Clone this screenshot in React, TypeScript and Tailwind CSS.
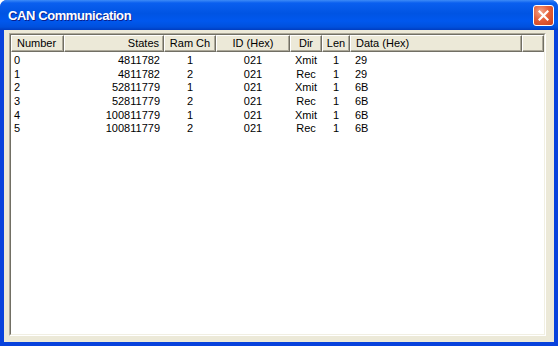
import React from 'react';

type Col = { label: string; w: string; head: string; cell: string };

const cols: Col[] = [
  { label: 'Number', w: 'w-[53px]', head: 'justify-start pl-[5px]', cell: 'text-left pl-[3px]' },
  { label: 'States', w: 'w-[100px]', head: 'justify-end pr-[4px]', cell: 'text-right pr-[4px]' },
  { label: 'Ram Ch', w: 'w-[52px]', head: 'justify-center', cell: 'text-center' },
  { label: 'ID (Hex)', w: 'w-[74px]', head: 'justify-center', cell: 'text-center' },
  { label: 'Dir', w: 'w-[32px]', head: 'justify-center', cell: 'text-center' },
  { label: 'Len', w: 'w-[28px]', head: 'justify-center', cell: 'text-center' },
  { label: 'Data (Hex)', w: 'w-[172px]', head: 'justify-start pl-[5px]', cell: 'text-left pl-[5px]' },
];

const rows = [
  ['0', '4811782', '1', '021', 'Xmit', '1', '29'],
  ['1', '4811782', '2', '021', 'Rec', '1', '29'],
  ['2', '52811779', '1', '021', 'Xmit', '1', '6B'],
  ['3', '52811779', '2', '021', 'Rec', '1', '6B'],
  ['4', '100811779', '1', '021', 'Xmit', '1', '6B'],
  ['5', '100811779', '2', '021', 'Rec', '1', '6B'],
];

// classic 3D header button
const headCell = 'h-[17px] flex items-center bg-[#ECE9D8] border-t border-l border-t-white border-l-white border-b border-r border-b-[#716F64] border-r-[#716F64] shadow-[inset_-1px_-1px_0_#ACA899]';

const App: React.FC = () => {
  return (
    <div className="w-[558px] h-[346px] flex flex-col bg-[#0842DC] rounded-t-[7px] overflow-hidden font-['Liberation_Sans',Arial,sans-serif]">
      {/* Title bar */}
      <div className="h-[30px] shrink-0 flex items-center justify-between pl-[8px] pr-[5px] bg-[linear-gradient(to_bottom,#3D8BF7_0%,#0A5FEF_10%,#0054E3_45%,#0058EE_70%,#0050DD_90%,#003DC0_100%)]">
        <span className="text-white font-bold text-[13px] tracking-[-0.4px] pt-[1px] [text-shadow:1px_1px_0_#0A1E8C]">CAN Communication</span>
        <button className="w-[21px] h-[21px] mr-[-1px] rounded-[3px] border border-white flex items-center justify-center bg-[radial-gradient(circle_at_35%_30%,#F3A58A_0%,#E5603A_45%,#C9401C_100%)]">
          <svg width="11" height="11" viewBox="0 0 11 11">
            <path d="M1.5 1.5 L9.5 9.5 M9.5 1.5 L1.5 9.5" stroke="white" strokeWidth="2.2" strokeLinecap="square" />
          </svg>
        </button>
      </div>

      {/* Client area */}
      <div className="flex-1 flex mx-[4px] mb-[4px] bg-[#ECE9D8] pl-[5px] pt-[3px] pr-[8px] pb-[6px]">
        <div className="flex-1 flex flex-col bg-white border-t border-l border-t-[#ACA899] border-l-[#ACA899] border-b border-r border-b-white border-r-white">
          <div className="flex-1 flex flex-col border-t border-l border-t-[#716F64] border-l-[#716F64] border-b border-r border-b-[#F1EFE2] border-r-[#F1EFE2] text-[11px] text-black leading-none">
            <div className="flex">
              {cols.map((c) => (
                <div key={c.label} className={`${c.w} ${headCell} ${c.head} shrink-0`}>
                  {c.label}
                </div>
              ))}
              <div className={`flex-1 ${headCell}`} />
            </div>
            <div className="pt-[2px]">
              {rows.map((r, i) => (
                <div key={i} className="flex h-[13.6px] items-center">
                  {r.map((v, j) => (
                    <div key={j} className={`${cols[j].w} ${cols[j].cell} shrink-0`}>
                      {v}
                    </div>
                  ))}
                </div>
              ))}
            </div>
          </div>
        </div>
      </div>
    </div>
  );
};

export default App;
